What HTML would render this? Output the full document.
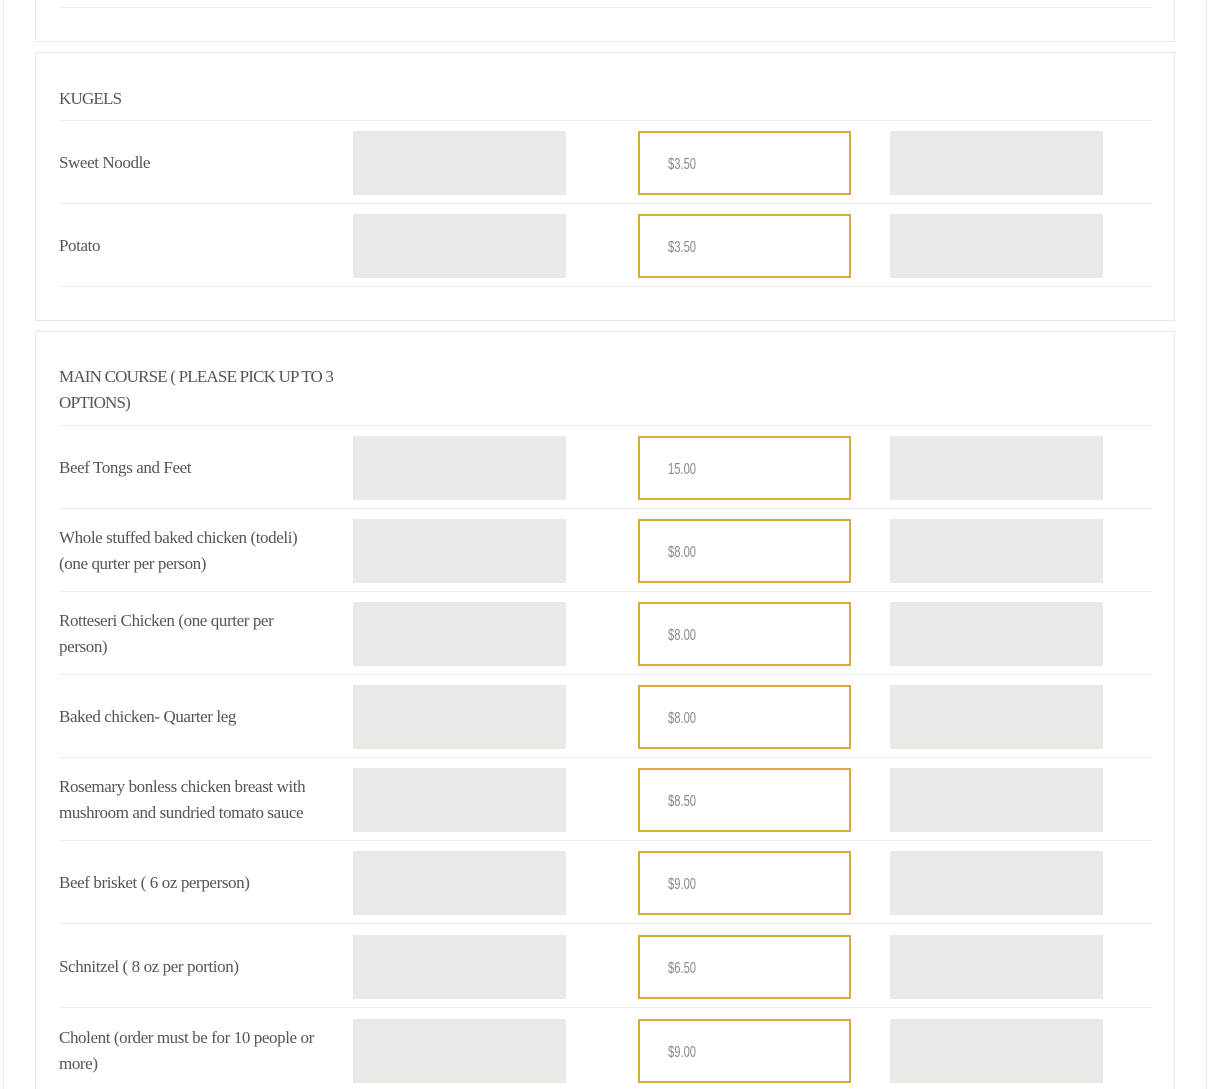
<!DOCTYPE html>
<html><head><meta charset="utf-8"><style>
*{box-sizing:border-box;margin:0;padding:0}
html,body{width:1210px;height:1089px;overflow:hidden}
body{background:#fff;font-family:"Liberation Serif",serif;color:#555;position:relative}
.outer{position:absolute;left:3px;top:-10px;width:1204px;height:1110px;border:1px solid #ececec}
.sec{position:absolute;left:35px;width:1140px;border:1px solid #e8e8e8;background:#fff}
.head{position:absolute;left:23px;width:285px;font-size:17px;line-height:26px;letter-spacing:-0.8px;color:#555}
.row{position:absolute;left:23px;width:1093px;height:83px;border-bottom:1px solid #ececec}
.hl{position:absolute;left:23px;width:1093px;height:1px;background:#ececec}
.lbl{position:absolute;left:0;top:0;height:83px;width:265px;display:flex;align-items:center;font-size:17px;line-height:26px;letter-spacing:-0.4px}
.g1,.g2,.p{position:absolute;top:10px;width:213px;height:64px}
.g1{left:294px;background:#eae9e5}
.g2{left:831px;background:#eae9e5}
.p{left:579px;border:2px solid #d8aa3a;background:#fff}
.p span{position:absolute;left:28px;top:2px;line-height:60px;font-family:"Liberation Sans",sans-serif;font-size:16px;color:#888;transform:scaleX(.7);transform-origin:left center}
</style></head><body>
<div class="outer"></div>

<div class="sec" style="top:-60px;height:102px">
  <div class="hl" style="top:66px"></div>
</div>

<div class="sec" style="top:52px;height:269px">
  <div class="head" style="top:33px">KUGELS</div>
  <div class="hl" style="top:67px"></div>
  <div class="row" style="top:68px"><div class="lbl">Sweet Noodle</div><div class="g1"></div><div class="p"><span>$3.50</span></div><div class="g2"></div></div>
  <div class="row" style="top:151px"><div class="lbl">Potato</div><div class="g1"></div><div class="p"><span>$3.50</span></div><div class="g2"></div></div>
</div>

<div class="sec" style="top:331px;height:800px">
  <div class="head" style="top:32px">MAIN COURSE ( PLEASE PICK UP TO 3 OPTIONS)</div>
  <div class="hl" style="top:93px"></div>
  <div class="row" style="top:94px"><div class="lbl">Beef Tongs and Feet</div><div class="g1"></div><div class="p"><span>15.00</span></div><div class="g2"></div></div>
  <div class="row" style="top:177px"><div class="lbl">Whole stuffed baked chicken (todeli) (one qurter per person)</div><div class="g1"></div><div class="p"><span>$8.00</span></div><div class="g2"></div></div>
  <div class="row" style="top:260px"><div class="lbl">Rotteseri Chicken (one qurter per person)</div><div class="g1"></div><div class="p"><span>$8.00</span></div><div class="g2"></div></div>
  <div class="row" style="top:343px"><div class="lbl">Baked chicken- Quarter leg</div><div class="g1"></div><div class="p"><span>$8.00</span></div><div class="g2"></div></div>
  <div class="row" style="top:426px"><div class="lbl">Rosemary bonless chicken breast with mushroom and sundried tomato sauce</div><div class="g1"></div><div class="p"><span>$8.50</span></div><div class="g2"></div></div>
  <div class="row" style="top:509px"><div class="lbl">Beef brisket ( 6 oz perperson)</div><div class="g1"></div><div class="p"><span>$9.00</span></div><div class="g2"></div></div>
  <div class="row" style="top:593px"><div class="lbl">Schnitzel ( 8 oz per portion)</div><div class="g1"></div><div class="p"><span>$6.50</span></div><div class="g2"></div></div>
  <div class="row" style="top:677px"><div class="lbl">Cholent (order must be for 10 people or more)</div><div class="g1"></div><div class="p"><span>$9.00</span></div><div class="g2"></div></div>
</div>
</body></html>
